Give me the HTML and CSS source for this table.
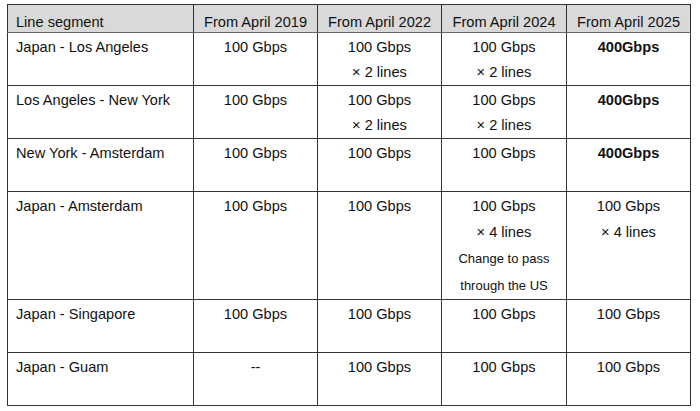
FILE: index.html
```html
<!DOCTYPE html>
<html>
<head>
<meta charset="utf-8">
<link rel="stylesheet" href="styles.css">
</head>
<body>
<div class="page">
<table class="grid">
  <colgroup>
    <col class="c1"><col class="c2"><col class="c3"><col class="c4"><col class="c5">
  </colgroup>
  <thead>
    <tr class="head">
      <th class="seg">Line segment</th>
      <th>From April 2019</th>
      <th>From April 2022</th>
      <th>From April 2024</th>
      <th>From April 2025</th>
    </tr>
  </thead>
  <tbody>
    <tr class="row">
      <td class="seg">Japan - Los Angeles</td>
      <td>100 Gbps</td>
      <td>100 Gbps<br>× 2 lines</td>
      <td>100 Gbps<br>× 2 lines</td>
      <td class="strong">400Gbps</td>
    </tr>
    <tr class="row">
      <td class="seg">Los Angeles - New York</td>
      <td>100 Gbps</td>
      <td>100 Gbps<br>× 2 lines</td>
      <td>100 Gbps<br>× 2 lines</td>
      <td class="strong">400Gbps</td>
    </tr>
    <tr class="row">
      <td class="seg">New York - Amsterdam</td>
      <td>100 Gbps</td>
      <td>100 Gbps</td>
      <td>100 Gbps</td>
      <td class="strong">400Gbps</td>
    </tr>
    <tr class="row tall">
      <td class="seg">Japan - Amsterdam</td>
      <td>100 Gbps</td>
      <td>100 Gbps</td>
      <td>100 Gbps<br>× 4 lines<br><span class="note">Change to pass<br>through the US</span></td>
      <td>100 Gbps<br>× 4 lines</td>
    </tr>
    <tr class="row">
      <td class="seg">Japan - Singapore</td>
      <td>100 Gbps</td>
      <td>100 Gbps</td>
      <td>100 Gbps</td>
      <td>100 Gbps</td>
    </tr>
    <tr class="row">
      <td class="seg">Japan - Guam</td>
      <td>--</td>
      <td>100 Gbps</td>
      <td>100 Gbps</td>
      <td>100 Gbps</td>
    </tr>
  </tbody>
</table>
</div>
</body>
</html>
```

FILE: styles.css
```css
html, body {
  margin: 0;
  padding: 0;
  background: #ffffff;
}

.page {
  padding: 4px 0 0 7px;
  font-family: "Liberation Sans", Arial, sans-serif;
  color: #111111;
}

.grid {
  border-collapse: collapse;
  table-layout: fixed;
  width: 683px;
  font-size: 14.6px;
}

.c1 { width: 186px; }
.c2 { width: 124px; }
.c3 { width: 124px; }
.c4 { width: 125px; }
.c5 { width: 124px; }

.grid th,
.grid td {
  border: 1px solid #333333;
  text-align: center;
  vertical-align: top;
  padding: 0 4px;
}

.head th {
  background: #d9d9d9;
  font-weight: normal;
  line-height: 19px;
  padding-top: 8px;
  height: 19px;
  border-bottom-color: #666666;
}

.row td {
  line-height: 25px;
  padding-top: 2px;
  height: 50px;
}

.row.tall td {
  line-height: 26px;
  padding-top: 1px;
  height: 104px;
}

.grid .seg {
  text-align: left;
  padding-left: 8px;
}

.strong {
  font-weight: bold;
}

.note {
  font-size: 13px;
}
```
